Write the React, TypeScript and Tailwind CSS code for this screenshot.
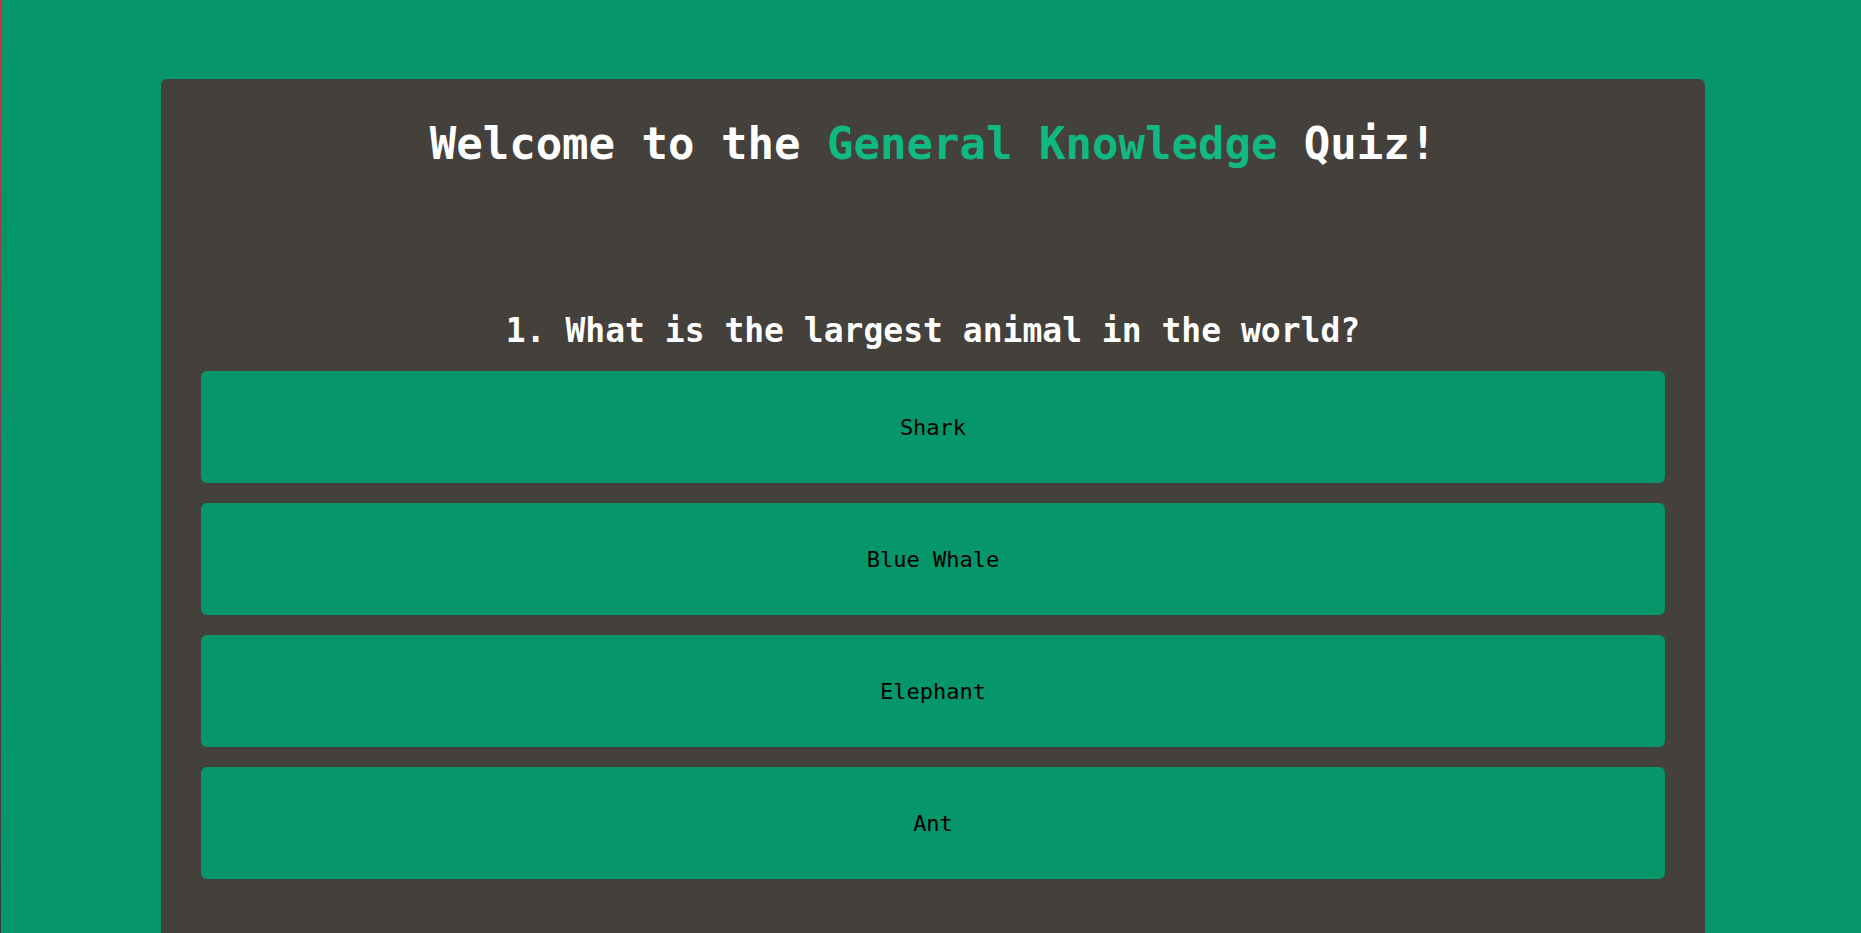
import { useState } from 'react';

const options = ['Shark', 'Blue Whale', 'Elephant', 'Ant'];

export default function App() {
  const [selected, setSelected] = useState<string | null>(null);

  return (
    <div className="flex min-h-[933px] bg-[#059669] font-['DejaVu_Sans_Mono',monospace]">
      <div className="w-px shrink-0 bg-gradient-to-b from-[#d5294f] via-[#6b3b4a] to-[#2b3a40]" />
      <div className="flex-1 pl-[160px] pr-[156px] pt-[79px]">
        <div className="rounded-t-md bg-[#44403c] px-[40px] pt-[37px] pb-[120px]">
          <h1 className="h-[56px] text-center text-[44px] font-bold leading-[56px] text-white">
            Welcome to the <span className="text-[#10b981]">General Knowledge</span> Quiz!
          </h1>

          <h2 className="mt-[139px] h-[40px] text-center text-[33px] font-bold leading-[40px] text-white">
            1. What is the largest animal in the world?
          </h2>

          <div className="mt-[20px] flex flex-col gap-[20px]">
            {options.map((option) => (
              <button
                key={option}
                onClick={() => setSelected(option)}
                className={`flex h-[112px] w-full items-center justify-center rounded-md text-[22px] text-black ${
                  selected === option ? 'bg-[#047857]' : 'bg-[#059669]'
                }`}
              >
                {option}
              </button>
            ))}
          </div>
        </div>
      </div>
    </div>
  );
}
